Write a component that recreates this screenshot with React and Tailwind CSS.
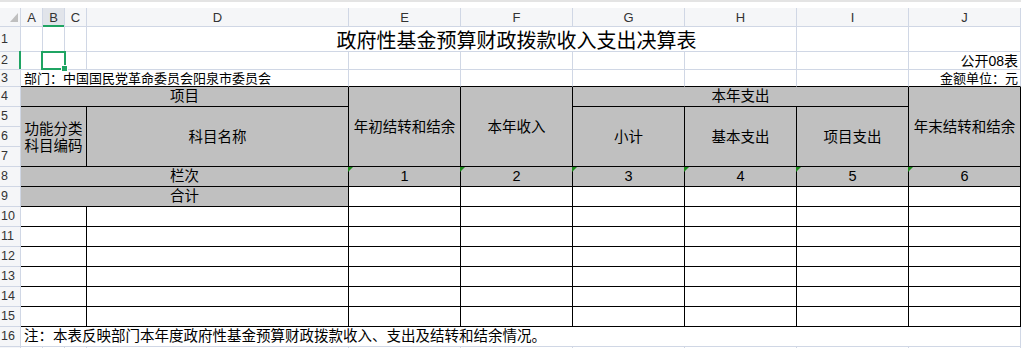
const lt = "border-r border-b border-[#d0d7e5]";
const blk = "border-r border-b border-black";
const ltBlk = "border-r border-b border-r-[#d0d7e5] border-b-black";
const gray = "bg-[#c0c0c0]";
const head = "bg-[#f5f6f8] text-[#333] text-[12.5px] font-['Liberation_Sans',sans-serif]";
const cols = ["A", "B", "C", "D", "E", "F", "G", "H", "I", "J"];
const green = "bg-[#1fa463]";

const RowHead = ({ n, active }) => (
  <div className={`relative flex items-center pl-[1px] ${head} ${lt}`}>
    {n}
    {active && <span className={`absolute right-[-1px] -top-px bottom-0 w-[2px] ${green}`} />}
  </div>
);

const ColHead = ({ label, active }) => (
  <div
    className={`relative flex items-end justify-center ${lt} ${
      active ? "bg-[#e1e4ea]" : "bg-[#f5f6f8]"
    } text-[#333] text-[13px] leading-[16px] font-['Liberation_Sans',sans-serif]`}
  >
    {label}
    {active && <span className={`absolute left-0 right-0 bottom-[-1px] h-[2px] ${green}`} />}
  </div>
);

const Flag = () => (
  <span className="absolute -left-px top-0 w-0 h-0 border-t-[5px] border-r-[5px] border-t-[#1a8a1a] border-r-transparent" />
);

const GrayCell = ({ className = "", children }) => (
  <div
    className={`flex items-center justify-center text-center ${gray} ${blk} ${className}`}
  >
    {children}
  </div>
);

const App = () => {
  return (
    <div className="w-[1021px] h-[348px] overflow-hidden bg-white text-black text-[14.5px] font-['Liberation_Sans','Noto_Sans_CJK_SC',sans-serif]">
      <div className="grid grid-cols-[21px_22px_22px_22px_262px_repeat(6,112px)] grid-rows-[8px_19px_25px_18px_17px_repeat(13,20px)_2px]">
        {/* top strip */}
        <div className="col-span-11 bg-white border-t-2 border-[#e4e4e4]" />

        {/* column letters */}
        <div className={`relative ${head} ${lt}`}>
          <svg className="absolute left-[10px] top-[5px]" width="8" height="9" viewBox="0 0 8 9">
            <polygon points="8,0 8,9 0,9" fill="#bfbfbf" />
          </svg>
        </div>
        {cols.map((c) => (
          <ColHead key={c} label={c} active={c === "B"} />
        ))}

        {/* row 1 */}
        <RowHead n="1" />
        <div className={lt} />
        <div className={lt} />
        <div className={lt} />
        <div className={`col-span-5 flex items-center justify-center pl-[150px] pt-[4px] whitespace-nowrap text-[20px] ${lt}`}>
          政府性基金预算财政拨款收入支出决算表
        </div>
        <div className={lt} />
        <div className={lt} />

        {/* row 2 */}
        <RowHead n="2" active />
        <div className={lt} />
        <div className={`relative ${lt}`}>
          <span className="absolute z-10 -left-[2px] -top-px right-[-2px] bottom-[-1px] border-2 border-[#1fa463]" />
          <span className={`absolute z-10 left-[19px] top-[14px] w-[5px] h-[5px] ${green} outline outline-1 outline-white`} />
        </div>
        <div className={lt} />
        <div className={lt} />
        <div className={lt} />
        <div className={lt} />
        <div className={lt} />
        <div className={lt} />
        <div className={lt} />
        <div className={`flex items-end justify-end pr-[2px] text-[14px] leading-none pb-[1px] ${lt}`}>
          公开08表
        </div>

        {/* row 3 */}
        <RowHead n="3" />
        <div className={`col-span-4 flex items-end pl-[3px] text-[13px] leading-none pb-[1px] whitespace-nowrap ${ltBlk}`}>
          部门：中国国民党革命委员会阳泉市委员会
        </div>
        <div className={ltBlk} />
        <div className={ltBlk} />
        <div className={ltBlk} />
        <div className={ltBlk} />
        <div className={ltBlk} />
        <div className={`flex items-end justify-end pr-[2px] text-[13px] leading-none pb-[1px] ${ltBlk}`}>
          金额单位：元
        </div>

        {/* row 4 */}
        <RowHead n="4" />
        <GrayCell className="col-span-4">项目</GrayCell>
        <GrayCell className="row-span-4 pt-[2px]">年初结转和结余</GrayCell>
        <GrayCell className="row-span-4 pt-[2px]">本年收入</GrayCell>
        <GrayCell className="col-span-3">本年支出</GrayCell>
        <GrayCell className="row-span-4 pt-[2px]">年末结转和结余</GrayCell>

        {/* rows 5-7 */}
        <RowHead n="5" />
        <GrayCell className="col-span-3 row-span-3 leading-[17px] pt-[3px]">
          功能分类
          <br />
          科目编码
        </GrayCell>
        <GrayCell className="row-span-3 pt-[3px]">科目名称</GrayCell>
        <GrayCell className="row-span-3 pt-[3px]">小计</GrayCell>
        <GrayCell className="row-span-3 pt-[3px]">基本支出</GrayCell>
        <GrayCell className="row-span-3 pt-[3px]">项目支出</GrayCell>
        <RowHead n="6" />
        <RowHead n="7" />

        {/* row 8 */}
        <RowHead n="8" />
        <GrayCell className="col-span-4">栏次</GrayCell>
        {[1, 2, 3, 4, 5, 6].map((n) => (
          <GrayCell key={n} className="relative">
            <Flag />
            {n}
          </GrayCell>
        ))}

        {/* row 9 */}
        <RowHead n="9" />
        <GrayCell className="col-span-4">合计</GrayCell>
        {[1, 2, 3, 4, 5, 6].map((n) => (
          <div key={n} className={blk} />
        ))}

        {/* rows 10-15 */}
        {[10, 11, 12, 13, 14, 15].map((r) => (
          <div key={r} className="contents">
            <RowHead n={String(r)} />
            <div className={`col-span-3 ${blk}`} />
            <div className={blk} />
            {[1, 2, 3, 4, 5, 6].map((n) => (
              <div key={n} className={blk} />
            ))}
          </div>
        ))}

        {/* row 16 */}
        <RowHead n="16" />
        <div className={`col-span-10 flex items-center pl-[3px] whitespace-nowrap ${lt}`}>
          注：本表反映部门本年度政府性基金预算财政拨款收入、支出及结转和结余情况。
        </div>

        {/* row 17 partial */}
        <div className={`${head} border-r border-[#d0d7e5]`} />
        {cols.map((c) => (
          <div key={c} className="border-r border-[#d0d7e5]" />
        ))}
      </div>
    </div>
  );
};

export default App;
